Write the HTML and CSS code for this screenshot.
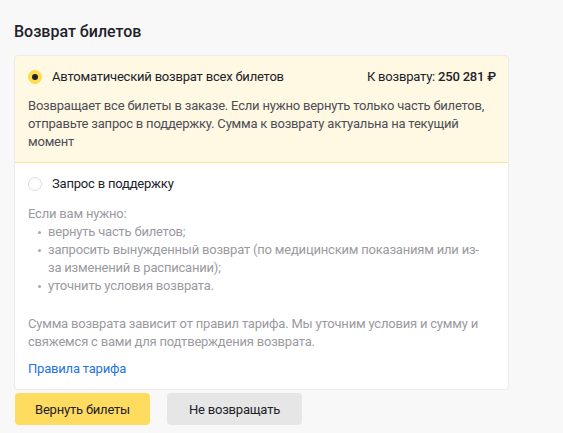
FILE: index.html
```html
<!DOCTYPE html>
<html lang="ru">
<head>
<meta charset="utf-8">
<link rel="stylesheet" href="styles.css">
</head>
<body>
<div class="page">
  <h1 class="title">Возврат билетов</h1>
  <div class="card">
    <div class="option option-active">
      <div class="option-head">
        <span class="radio radio-checked"></span>
        <span class="option-label">Автоматический возврат всех билетов</span>
        <span class="amount">К возврату: <b>250 281 ₽</b></span>
      </div>
      <p class="desc">Возвращает все билеты в заказе. Если нужно вернуть только часть билетов, отправьте запрос в поддержку. Сумма к возврату актуальна на текущий момент</p>
    </div>
    <div class="option">
      <div class="option-head">
        <span class="radio"></span>
        <span class="option-label">Запрос в поддержку</span>
      </div>
      <div class="muted">
        <p class="lead">Если вам нужно:</p>
        <ul class="list">
          <li>вернуть часть билетов;</li>
          <li>запросить вынужденный возврат (по медицинским показаниям или из-за изменений в расписании);</li>
          <li>уточнить условия возврата.</li>
        </ul>
        <p class="note">Сумма возврата зависит от правил тарифа. Мы уточним условия и сумму и свяжемся с вами для подтверждения возврата.</p>
      </div>
      <a class="link" href="#">Правила тарифа</a>
    </div>
  </div>
  <div class="actions">
    <button class="btn btn-primary">Вернуть билеты</button>
    <button class="btn btn-secondary">Не возвращать</button>
  </div>
</div>
</body>
</html>
```

FILE: styles.css
```css
html, body {
  margin: 0;
  padding: 0;
  background: #f8f8f8;
}
body {
  font-family: Roboto, "Noto Sans", "Liberation Sans", sans-serif;
  color: #21212b;
  font-size: 13px;
  letter-spacing: -0.2px;
}
.page {
  padding: 20px 0 0 14px;
  width: 495px;
}
.title {
  margin: 0 0 11px 0;
  font-size: 16px;
  line-height: 24px;
  font-weight: 500;
  letter-spacing: 0;
  color: #21212b;
}
.card {
  background: #fff;
  border: 1px solid #ebebeb;
  border-radius: 4px;
  overflow: hidden;
}
.option {
  padding: 11px 12px 11px 13px;
}
.option-active {
  background: #fff8e3;
  margin: -1px -1px 0 -1px;
  border: 1px solid #fde39a;
  border-radius: 4px 4px 0 0;
  padding-bottom: 11px;
}
.option-head {
  display: flex;
  align-items: center;
  line-height: 20px;
}
.radio {
  width: 12px;
  height: 12px;
  border-radius: 50%;
  border: 1px solid #dcdcdc;
  background: #fff;
  margin-right: 10px;
  flex: none;
  display: flex;
  align-items: center;
  justify-content: center;
}
.radio-checked {
  border-color: #ffdb4d;
  background: #ffdb4d;
}
.radio-checked::after {
  content: "";
  width: 6px;
  height: 6px;
  border-radius: 50%;
  background: #21212b;
}
.option-label {
  flex: 1;
  color: #21212b;
}
.amount {
  color: #21212b;
}
.amount b {
  font-weight: 500;
}
.desc {
  margin: 10px 0 0 0;
  line-height: 18px;
  color: #4d4d55;
}
.muted {
  color: #9a9a9f;
  line-height: 18px;
  margin-top: 11px;
}
.lead {
  margin: 0;
}
.list {
  margin: 0;
  padding: 0 8px 0 20px;
  list-style: none;
}
.list li {
  position: relative;
}
.list li::before {
  content: "";
  position: absolute;
  left: -10px;
  top: 8px;
  width: 3px;
  height: 3px;
  border-radius: 50%;
  background: #a8a8ad;
}
.note {
  margin: 20px 0 0 0;
}
.link {
  display: block;
  margin-top: 9px;
  line-height: 18px;
  color: #1e73e0;
  text-decoration: none;
}
.actions {
  display: flex;
  gap: 17px;
  margin-top: 3px;
  padding-left: 1px;
}
.btn {
  width: 135px;
  height: 32px;
  border: none;
  border-radius: 4px;
  font-family: inherit;
  font-size: 13px;
  letter-spacing: -0.2px;
  color: #21212b;
  padding: 0;
}
.btn-primary {
  background: #ffdc60;
}
.btn-secondary {
  background: #e6e6e6;
}
```
